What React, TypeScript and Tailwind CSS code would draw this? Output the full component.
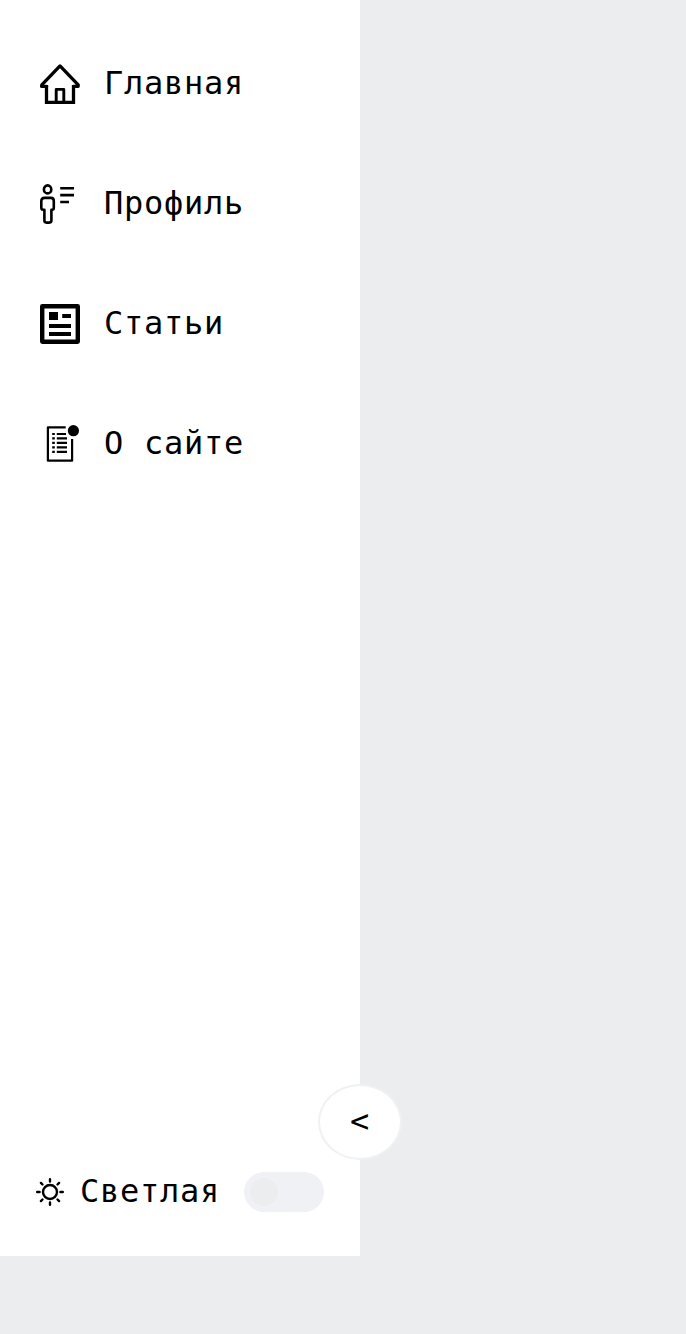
import type { ReactNode } from 'react';

const HomeIcon = () => (
  <svg width="40" height="40" viewBox="0 0 40 40" fill="none" stroke="#000" strokeWidth="3.3" strokeLinejoin="round" strokeLinecap="round">
    <path strokeLinejoin="miter" strokeLinecap="butt" d="M6.5 21V38.3H33.5V21" />
    <path d="M1.8 22.3V20.9L20 1.9L38.2 20.9V22.3H33.6" />
    <path d="M1.8 22.3H6.4" />
    <path strokeWidth="2.9" strokeLinecap="butt" d="M16.2 38V25.4H23.8V38" />
  </svg>
);

const ProfileIcon = () => (
  <svg width="40" height="40" viewBox="0 0 40 40" fill="none" stroke="#000" strokeWidth="2.6" strokeLinejoin="round">
    <ellipse cx="7.6" cy="5.4" rx="3.7" ry="4" />
    <path d="M4.4 25.7H3.1Q1.3 25.7 1.3 23.5V17Q1.3 13.9 4.4 13.9H10.9Q13.8 13.9 13.8 17V23.5Q13.8 25.7 12.2 25.7H11.4V36.6Q11.4 38.6 9.4 38.6H6.4Q4.4 38.6 4.4 36.6Z" />
    <path d="M20.2 4.2H34M20.2 11.1H34M20.2 18H29" />
  </svg>
);

const ArticlesIcon = () => (
  <svg width="40" height="40" viewBox="0 0 40 40">
    <rect x="2.2" y="2.2" width="35.6" height="35.6" rx=".2" fill="none" stroke="#000" strokeWidth="4.4" strokeLinejoin="round" />
    <path d="M9 8H18V16H9ZM22.2 10H31V14H22.2ZM9 20H31V24H9ZM9 28H31V32H9Z" />
  </svg>
);

const AboutIcon = () => (
  <svg width="40" height="40" viewBox="0 0 40 40" fill="none" stroke="#000" strokeWidth="2.2">
    <path strokeLinejoin="round" d="M25.7 3.3H7.9V36.7H32.1V15" />
    <circle cx="33.4" cy="6.7" r="5.6" fill="#000" stroke="none" />
    <path strokeWidth="2.2" d="M12.2 10H14.8M16.8 10H26M12.2 14.4H14.8M16.8 14.4H27M12.2 18.9H14.8M16.8 18.9H27M12.2 23.4H14.8M16.8 23.4H27M12.2 27.9H14.8M16.8 27.9H27" />
  </svg>
);

const SunIcon = () => (
  <svg width="28" height="28" viewBox="0 0 28 28" fill="none" stroke="#000" strokeWidth="2.4" strokeLinecap="round">
    <circle cx="14" cy="14" r="7" />
    <path d="M14 1.2V3.6M14 24.4V26.8M1.2 14H3.6M24.4 14H26.8M4.9 4.9L6.5 6.5M21.5 21.5L23.1 23.1M4.9 23.1L6.5 21.5M21.5 6.5L23.1 4.9" />
  </svg>
);

const items: { label: string; icon: ReactNode }[] = [
  { label: 'Главная', icon: <HomeIcon /> },
  { label: 'Профиль', icon: <ProfileIcon /> },
  { label: 'Статьи', icon: <ArticlesIcon /> },
  { label: 'О сайте', icon: <AboutIcon /> },
];

export default function App() {
  return (
    <div className="h-[1334px] bg-[#ecedef] font-['DejaVu_Sans_Mono',monospace] text-[32px] leading-10 tracking-[0.735px] text-black">
      <aside className="relative flex h-[1256px] w-[360px] flex-col justify-between bg-white">
        <nav className="flex flex-col gap-20 px-10 pt-16">
          {items.map((item) => (
            <a key={item.label} href="#" className="flex h-10 items-center gap-6 whitespace-nowrap">
              {item.icon}
              <span className="-mt-0.5">{item.label}</span>
            </a>
          ))}
        </nav>
        <div className="mb-11 flex h-10 items-center px-9">
          <SunIcon />
          <span className="-mt-0.5 ml-4">Светлая</span>
          <button role="switch" aria-checked="false" aria-label="Светлая" className="ml-auto flex h-10 w-20 items-center rounded-full bg-[#f0f1f5] px-1.5">
            <span className="size-7 rounded-full bg-[#ecedef]" />
          </button>
        </div>
        <button className="absolute top-[1084px] left-[318px] flex h-[76px] w-[84px] items-center justify-center rounded-[50%] border-2 border-[#f0f1f5] bg-white pb-0.5">
          &lt;
        </button>
      </aside>
    </div>
  );
}
